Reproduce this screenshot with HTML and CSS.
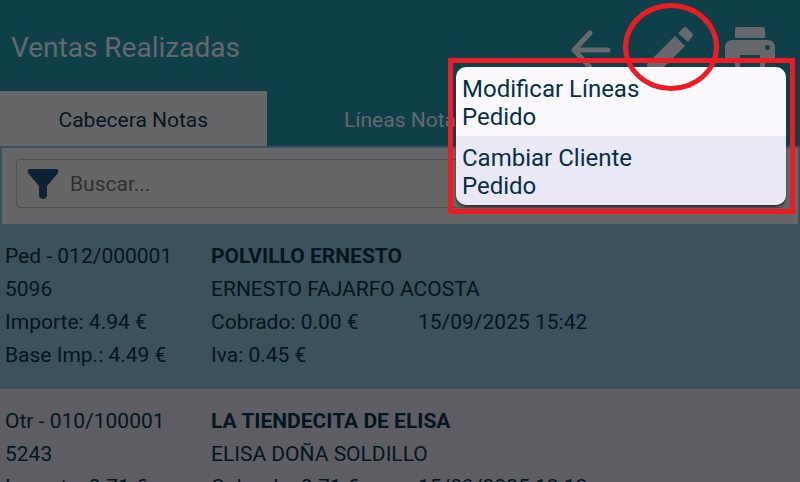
FILE: index.html
```html
<!DOCTYPE html>
<html lang="es">
<head>
<meta charset="utf-8">
<meta name="viewport" content="width=device-width, initial-scale=1">
<title>Ventas Realizadas</title>
<link rel="stylesheet" href="styles.css">
</head>
<body>
<div class="app">
  <header class="bar">
    <h1 class="title">Ventas Realizadas</h1>
    <div class="actions">
      <button class="icon-button" type="button" aria-label="Volver">
        <svg class="icon" viewBox="0 0 56 56" fill="none" stroke="currentColor" stroke-width="5" stroke-linecap="round" stroke-linejoin="round"><path d="M42 30H8M24 13L8 30L24 47"/></svg>
      </button>
      <button class="icon-button" type="button" aria-label="Editar" aria-haspopup="menu" aria-expanded="true">
        <svg class="icon" viewBox="0 0 56 56" fill="currentColor"><path d="M3 44L31 16L41 26L13 54H3ZM34 13L39 8Q41 6 43 8L48 13Q50 15 48 17L44 22Z"/></svg>
      </button>
      <button class="icon-button" type="button" aria-label="Imprimir">
        <svg class="icon" viewBox="0 0 56 56" fill="currentColor"><path d="M15 7H41Q43 7 43 9V18H13V9Q13 7 15 7Z"/><path fill-rule="evenodd" d="M11 20H45Q53 20 53 28V42H43V52H13V42H3V28Q3 20 11 20ZM18 35V48H38V35ZM45.500 25A2.500 2.500 0 1 0 45.500 30A2.500 2.500 0 1 0 45.500 25Z"/></svg>
      </button>
    </div>
  </header>

  <nav class="tabs">
    <button class="tab tab-active" type="button">Cabecera Notas</button>
    <button class="tab" type="button">Líneas Nota</button>
  </nav>

  <div class="search">
    <label class="search-box">
      <svg class="funnel" viewBox="0 0 32 32" fill="currentColor" aria-hidden="true"><path d="M2 1H30Q32 2 31 5L20 18V28Q19 31 16 31T12 28V18L1 5Q0 2 2 1Z"/></svg>
      <input class="search-input" type="text" placeholder="Buscar..." aria-label="Buscar">
    </label>
  </div>

  <main>
    <article class="sale sale-selected">
      <span>Ped - 012/000001</span><strong class="wide">POLVILLO ERNESTO</strong>
      <span>5096</span><span class="wide">ERNESTO FAJARFO ACOSTA</span>
      <span>Importe: 4.94 €</span><span>Cobrado: 0.00 €</span><time>15/09/2025 15:42</time>
      <span>Base Imp.: 4.49 €</span><span class="wide">Iva: 0.45 €</span>
    </article>
    <article class="sale">
      <span>Otr - 010/100001</span><strong class="wide">LA TIENDECITA DE ELISA</strong>
      <span>5243</span><span class="wide">ELISA DOÑA SOLDILLO</span>
      <span>Importe: 0.71 €</span><span>Cobrado: 0.71 €</span><time>15/09/2025 13:13</time>
    </article>
  </main>

  <div class="popup-frame">
    <div class="menu" role="menu">
      <button class="menu-item" type="button" role="menuitem">Modificar Líneas<br>Pedido</button>
      <button class="menu-item menu-item-alt" type="button" role="menuitem">Cambiar Cliente<br>Pedido</button>
    </div>
  </div>
  <div class="ring"></div>
</div>
</body>
</html>
```
FILE: styles.css
```css
* {
  box-sizing: border-box;
}

body {
  margin: 0;
  font-family: Roboto, "Liberation Sans", sans-serif;
  font-size: 21px;
  color: #03161f;
  background: #5e5d63;
}

button,
input {
  font: inherit;
  color: inherit;
  border: 0;
  padding: 0;
  background: none;
}

.app {
  position: relative;
  height: 100vh;
  overflow: hidden;
}

.bar {
  display: flex;
  align-items: center;
  justify-content: space-between;
  padding: 20px 22px 15px 11px;
  background: #0f404a;
  color: #66686b;
}

.title {
  margin: 0;
  font-size: 28px;
  font-weight: 400;
  line-height: 32px;
}

.actions {
  display: flex;
  gap: 22px;
}

.icon-button {
  display: flex;
}

.icon {
  width: 56px;
  height: 56px;
}

.tabs {
  display: grid;
  grid-template-columns: repeat(3, 1fr);
  background: #0f404a;
  color: #66686b;
}

.tab {
  padding: 17px 0 14px;
  line-height: 24px;
}

.tab-active {
  background: #666668;
  color: #03161f;
}

.search {
  padding: 11px 14px 16px;
  border: 2px solid #3b525c;
  border-bottom: 0;
  background: #666668;
}

.search-box {
  display: flex;
  align-items: center;
  gap: 11px;
  padding: 8px 10px 7px;
  border: 1px solid #515153;
  border-radius: 4px;
  background: #666;
}

.funnel {
  width: 32px;
  height: 32px;
  color: #0d2233;
}

.search-input {
  flex: 1;
  min-width: 0;
  line-height: 32px;
  outline: 0;
}

.search-input::placeholder {
  color: #303030;
  opacity: 1;
}

.sale {
  display: grid;
  grid-template-columns: 206px 207px 1fr;
  padding: 16px 5px 17px;
  line-height: 33px;
  background: #5e5d63;
}

.sale-selected {
  background: #3b525c;
}

.wide {
  grid-column: span 2;
}

.popup-frame {
  position: absolute;
  top: 58px;
  right: 5px;
  width: 347px;
  padding: 4px 4px 4px 3px;
  border: 5px solid #ed1c24;
}

.menu {
  display: flex;
  flex-direction: column;
  overflow: hidden;
  border-radius: 10px;
  box-shadow: 0 2px 2px #303030;
  color: #06304a;
}

.menu-item {
  padding: 8px 6px 5px;
  font-size: 24px;
  line-height: 28px;
  text-align: left;
  background: #fbf9fe;
}

.menu-item-alt {
  background: #eae8f5;
}

.ring {
  position: absolute;
  top: 3px;
  right: 81px;
  width: 96px;
  height: 88px;
  border: 5px solid #ed1c24;
  border-radius: 50%;
  pointer-events: none;
}
```
